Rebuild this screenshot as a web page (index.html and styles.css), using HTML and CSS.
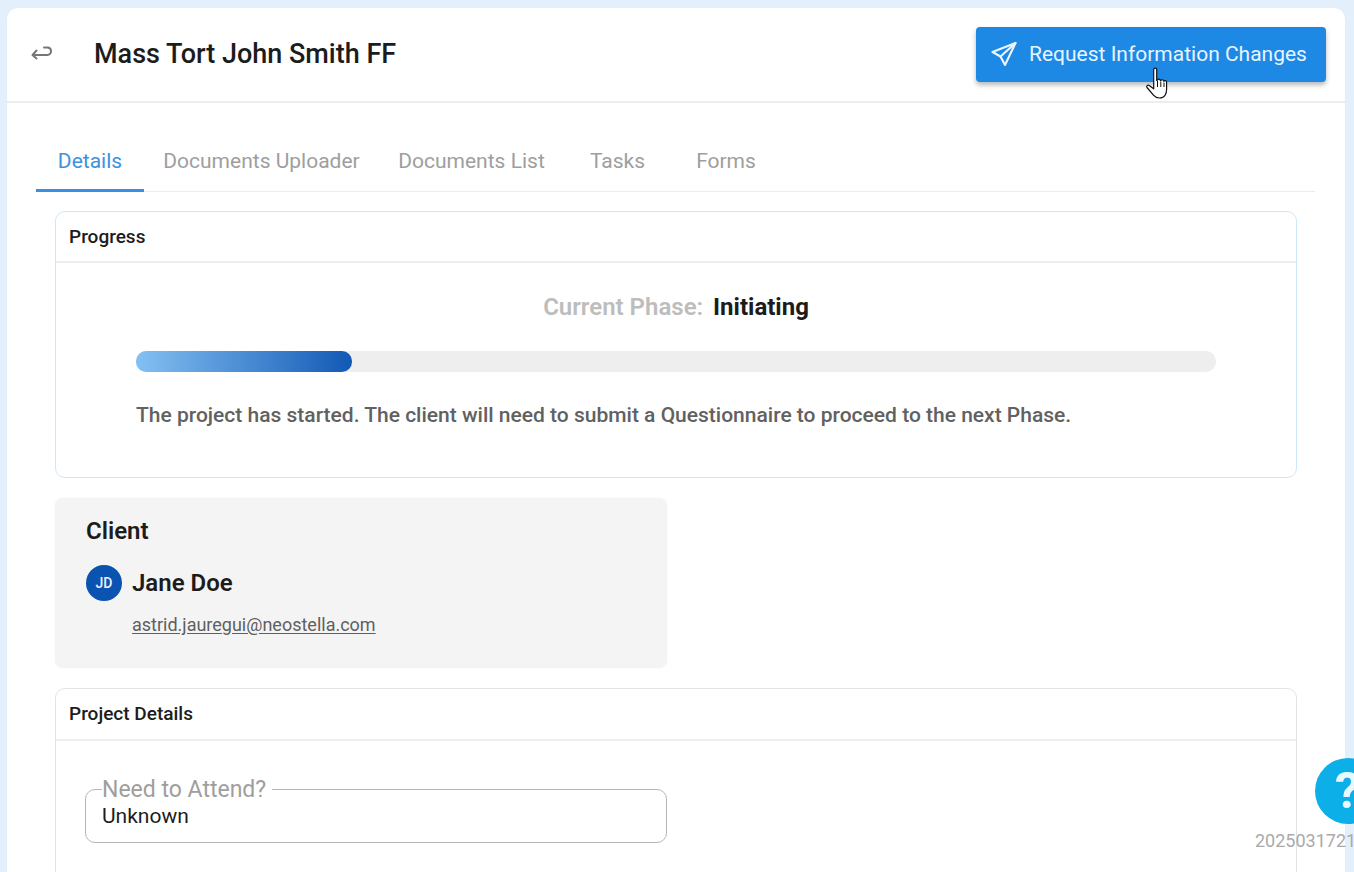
FILE: index.html
```html
<!DOCTYPE html>
<html lang="en">
<head>
<meta charset="utf-8">
<title>Mass Tort John Smith FF</title>
<link rel="stylesheet" href="styles.css">
</head>
<body>
<main class="shell">
  <header class="topbar">
    <div class="topbar-left">
      <svg class="back" width="24" height="24" viewBox="0 0 24 24" fill="none" stroke="#777" stroke-width="2" stroke-linecap="round" stroke-linejoin="round"><path d="M6.500 8.500 2.500 13l4 3.500"/><path d="M3 13h14.500a3.600 3.600 0 0 0 3.500-3.700V9a3.600 3.600 0 0 0-3.500-3.500H14"/></svg>
      <h1 class="title">Mass Tort John Smith FF</h1>
    </div>
    <button class="primary">
      <svg width="26" height="26" viewBox="0 0 26 26" fill="none" stroke="#eaf6ff" stroke-width="2.100" stroke-linejoin="round" stroke-linecap="round"><path d="M24.500 2 1.500 11l8 4.500 4.500 8.500z"/><path d="M24.500 2 9.500 15.500"/></svg>
      <span>Request Information Changes</span>
    </button>
  </header>
  <div class="content">
    <nav class="tabs">
      <a class="tab tab-active">Details</a>
      <a class="tab tab-uploader">Documents Uploader</a>
      <a class="tab tab-list">Documents List</a>
      <a class="tab tab-tasks">Tasks</a>
      <a class="tab tab-forms">Forms</a>
    </nav>
    <div class="stack">
      <section class="panel panel-progress">
        <h2 class="panel-title">Progress</h2>
        <div class="progress-body">
          <p class="phase"><span class="phase-label">Current Phase:</span><span class="phase-value">Initiating</span></p>
          <div class="track"><div class="fill" style="width:20%"></div></div>
          <p class="note">The project has started. The client will need to submit a Questionnaire to proceed to the next Phase.</p>
        </div>
      </section>
      <section class="client">
        <h3 class="client-title">Client</h3>
        <div class="client-row">
          <span class="avatar">JD</span>
          <span class="client-name">Jane Doe</span>
        </div>
        <a class="client-mail">astrid.jauregui@neostella.com</a>
      </section>
      <section class="panel panel-details">
        <h2 class="panel-title">Project Details</h2>
        <div class="details-body">
          <fieldset class="field">
            <legend class="field-label">Need to Attend?</legend>
            <div class="field-value">Unknown</div>
          </fieldset>
        </div>
      </section>
    </div>
  </div>
</main>
<svg class="cursor" width="25" height="33" viewBox="0 0 22 33"><path d="M8.200 2.500c0-1.900 3-1.900 3 0v11l.6-.2c.3-1.600 2.900-1.500 3 .2l.5.1c.4-1.300 2.700-1.100 2.800.5l.4.1c.5-1 2.600-.7 2.600 1v7c0 2.500-.6 4.500-1.500 6-1 1.800-3 2.800-5.600 2.800-2.500 0-4.300-.8-5.800-2.600L1.500 20.500c-1.100-1.400.7-3 2.200-2l4.500 3.300z" fill="#fff" stroke="#111" stroke-width="1.200" stroke-linejoin="round"/><path d="M12 14v6M15.300 14.500V20M18.500 15.500V20" stroke="#111" fill="none" stroke-width="1"/></svg>
<div class="help">?</div>
<div class="version">2025031721</div>
</body>
</html>
```
FILE: styles.css
```css
* { box-sizing: border-box; }
html, body { height: 100%; }
body {
  margin: 0;
  height: 872px;
  overflow: hidden;
  background: #e3f0fb;
  font-family: Roboto, "Liberation Sans", sans-serif;
  color: #1a1a1a;
  position: relative;
  padding: 8px 9px 0 7px;
}
.shell {
  background: #fff;
  height: 864px;
  border-radius: 10px 10px 0 0;
  overflow: hidden;
  box-shadow: 0 0 1px #c6dcef;
}
.topbar {
  height: 95px;
  border-bottom: 2px solid #eeeeee;
  display: flex;
  align-items: center;
  justify-content: space-between;
  padding: 0 19px 0 23px;
}
.topbar-left { display: flex; align-items: center; }
.back { margin-right: 40px; margin-top: -2px; }
.title { margin: -2px 0 0; font-size: 27px; font-weight: 500; line-height: 30px; letter-spacing: 0; color: #1c1c1c; }
.primary {
  width: 350px;
  height: 55px;
  margin-top: -1px;
  background: #1e88e5;
  color: #e6f5ff;
  border: 0;
  border-radius: 4px;
  box-shadow: 0 3px 5px rgba(0,0,0,.28);
  display: flex;
  align-items: center;
  padding: 0 0 0 15px;
  gap: 12px;
  font: 400 21px/24px Roboto, sans-serif;
}
.content { padding: 29px 30px 0 29px; }
.tabs {
  display: flex;
  height: 60px;
  border-bottom: 1px solid #ececec;
}
.tab {
  height: 60px;
  display: flex;
  align-items: center;
  justify-content: center;
  font-size: 21px;
  color: #9e9e9e;
  padding-bottom: 3px;
}
.tab-active { width: 108px; color: #3d92dd; border-bottom: 3px solid #3a8fe0; padding-bottom: 0; }
.tab-uploader { width: 235px; }
.tab-list { width: 185px; }
.tab-tasks { width: 107px; }
.tab-forms { width: 110px; }
.stack { padding: 19px 18px 0 19px; display: flex; flex-direction: column; gap: 20px; }
.panel {
  border: 1px solid #cfe6f7;
  border-radius: 10px;
  background: #fff;
}
.panel-progress { height: 267px; }
.panel-details { height: 300px; border-color: #e3e3e3; }
.panel-title {
  margin: 0;
  height: 51px;
  padding: 0 13px;
  display: flex;
  align-items: center;
  font-size: 19px;
  font-weight: 500;
  color: #1c1c1c;
  border-bottom: 2px solid #eeeeee;
}
.panel-details .panel-title { height: 52px; padding-bottom: 2px; }
.progress-body { padding: 29px 80px 0 80px; }
.phase { margin: 0; display: flex; justify-content: center; gap: 10px; font-size: 24px; line-height: 30px; font-weight: 700; }
.phase-label { color: #bdbdbd; font-weight: 600; }
.phase-value { color: #1c1c1c; }
.track { margin-top: 29px; height: 21px; background: #eeeeee; border-radius: 10px; }
.fill { height: 100%; border-radius: 10px; background: linear-gradient(90deg, #84c0f2, #1259b5); }
.note { margin: 29px 0 0 0; font-size: 21px; line-height: 28px; font-weight: 500; color: #616161; white-space: nowrap; }
.client {
  width: 612px;
  height: 170px;
  background: #f4f4f4;
  border-radius: 8px;
  padding: 18px 31px;
  box-shadow: 0 0 2px rgba(0,0,0,.06);
}
.client-title { margin: 0; font-size: 24px; line-height: 30px; font-weight: 600; color: #1c1c1c; }
.client-row { display: flex; align-items: center; gap: 10px; margin-top: 19px; }
.avatar {
  width: 36px; height: 36px; border-radius: 50%;
  background: #0a53b0;
  color: #e9f4ff;
  font-size: 14px; font-weight: 500;
  display: flex; align-items: center; justify-content: center;
}
.client-name { font-size: 24px; font-weight: 600; color: #1c1c1c; }
.client-mail {
  display: block;
  margin: 12px 0 0 46px;
  font-size: 18px;
  line-height: 24px;
  color: #5f5f5f;
  text-decoration: underline;
  text-underline-offset: 2px;
}
.details-body { padding: 34px 29px 0 29px; }
.field {
  margin: 0;
  width: 582px;
  height: 68px;
  border: 1px solid #b5b5b5;
  border-radius: 10px;
  padding: 0 16px;
}
.field-label { padding: 2px 6px 0 0; margin-left: 0; font-size: 23px; line-height: 26px; color: #9e9e9e; }
.field-value { font-size: 21px; line-height: 26px; font-weight: 400; color: #1c1c1c; margin-top: 0; }
.help {
  position: absolute;
  left: 1315px; top: 758px;
  width: 66px; height: 66px;
  border-radius: 50%;
  background: #0cafe8;
  color: #eaf8ff;
  font-size: 50px; font-weight: 700;
  line-height: 66px;
  padding-left: 20px;
}
.version {
  position: absolute;
  left: 1255px; top: 830px;
  width: 110px;
  font-size: 18px;
  line-height: 22px;
  color: #aaaaaa;
  white-space: nowrap;
}
.cursor { position: absolute; left: 1144px; top: 67px; }
```
